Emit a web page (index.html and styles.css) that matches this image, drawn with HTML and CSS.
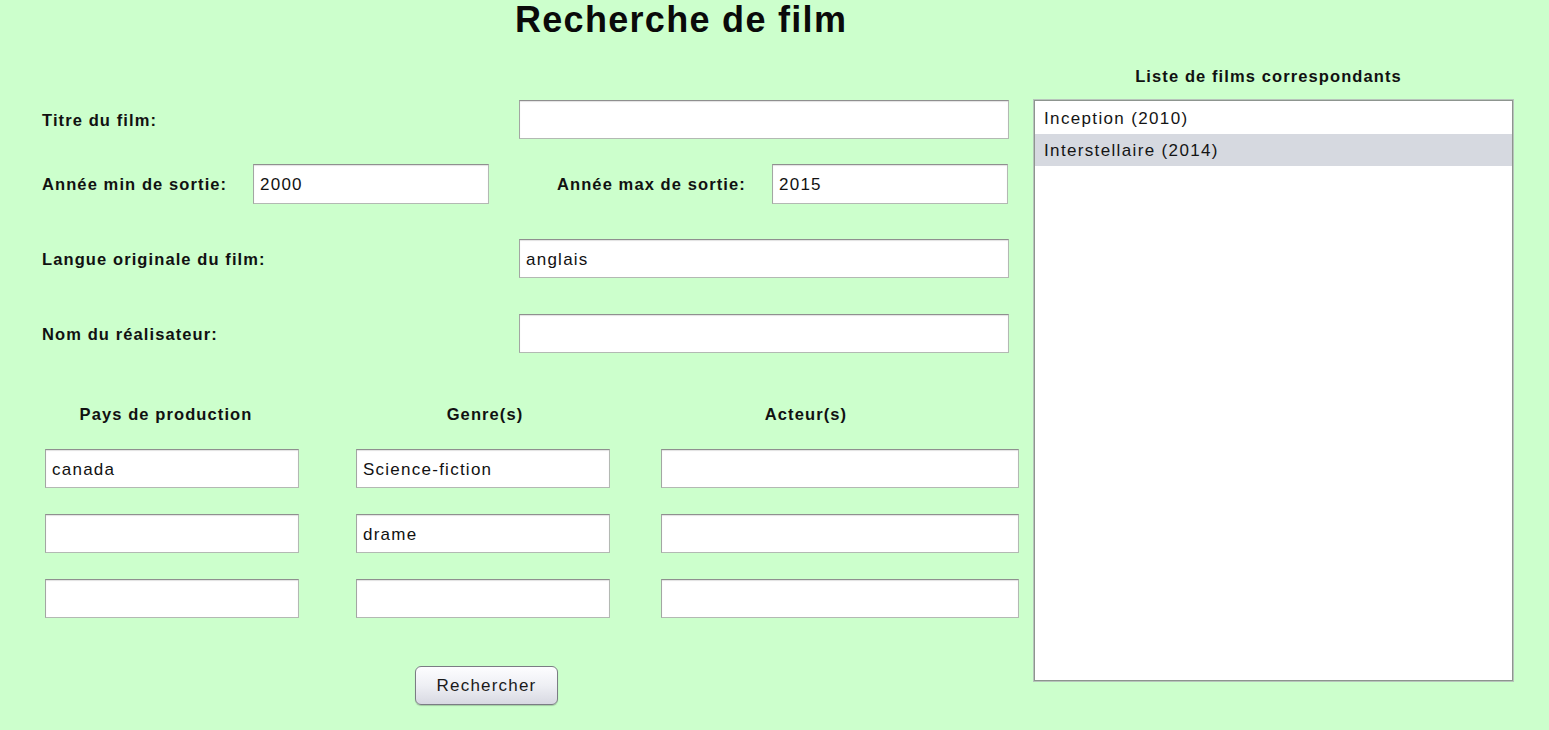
FILE: index.html
```html
<!DOCTYPE html>
<html lang="fr">
<head>
<meta charset="utf-8">
<title>Recherche de film</title>
<link rel="stylesheet" href="styles.css">
</head>
<body>
<div class="page">
  <div class="left">
    <h1 class="title">Recherche de film</h1>

    <div class="row row-titre">
      <label class="label">Titre du film:</label>
      <input class="field field-wide" type="text" value="">
    </div>

    <div class="row row-annee">
      <label class="label">Année min de sortie:</label>
      <input class="field field-year" type="text" value="2000">
      <label class="label label-max">Année max de sortie:</label>
      <input class="field field-year" type="text" value="2015">
    </div>

    <div class="row row-langue">
      <label class="label">Langue originale du film:</label>
      <input class="field field-wide" type="text" value="anglais">
    </div>

    <div class="row row-nom">
      <label class="label">Nom du réalisateur:</label>
      <input class="field field-wide" type="text" value="">
    </div>

    <div class="cols">
      <div class="col col-pays">
        <div class="col-head">Pays de production</div>
        <input class="field" type="text" value="canada">
        <input class="field" type="text" value="">
        <input class="field" type="text" value="">
      </div>
      <div class="col col-genre">
        <div class="col-head">Genre(s)</div>
        <input class="field" type="text" value="Science-fiction">
        <input class="field" type="text" value="drame">
        <input class="field" type="text" value="">
      </div>
      <div class="col col-acteur">
        <div class="col-head">Acteur(s)</div>
        <input class="field" type="text" value="">
        <input class="field" type="text" value="">
        <input class="field" type="text" value="">
      </div>
    </div>

    <div class="actions">
      <button class="btn" type="button">Rechercher</button>
    </div>
  </div>

  <div class="right">
    <div class="list-head">Liste de films correspondants</div>
    <ul class="list">
      <li class="item">Inception (2010)</li>
      <li class="item item-selected">Interstellaire (2014)</li>
    </ul>
  </div>
</div>
</body>
</html>
```

FILE: styles.css
```css
* {
  box-sizing: border-box;
}

html, body {
  margin: 0;
  padding: 0;
  background: #ccffcc;
}

body {
  font-family: "Liberation Sans", Arial, sans-serif;
  color: #111;
  width: 1549px;
  height: 730px;
  overflow: hidden;
}

.page {
  display: flex;
  align-items: flex-start;
}

.left {
  width: 1034px;
  flex: none;
}

.title {
  margin: 0 0 0 515px;
  font-size: 36px;
  line-height: 40px;
  height: 40px;
  font-weight: bold;
  letter-spacing: 1.3px;
  color: #0a0a0a;
  white-space: nowrap;
}

.row {
  display: flex;
  align-items: center;
  height: 39px;
  padding-left: 42px;
}

.row-titre { margin-top: 60px; }
.row-annee { margin-top: 25px; }
.row-langue { margin-top: 36px; }
.row-nom { margin-top: 36px; }

.label {
  font-size: 16.5px;
  font-weight: bold;
  letter-spacing: 1.1px;
  line-height: 20px;
  white-space: nowrap;
  padding-top: 1px;
}

.row .label:first-child {
  width: 477px;
  flex: none;
}

.row-annee .label:first-child {
  width: 211px;
}

.label-max {
  width: 283px;
  flex: none;
  padding-left: 68px;
}

.field {
  display: block;
  height: 39px;
  margin: 0;
  padding: 3px 0 0 6px;
  background: #fff;
  border: 1px solid #b3b9b3;
  border-top-color: #8f8f8f;
  border-left-color: #a3a6a3;
  box-shadow: inset 0 1px 1px rgba(0, 0, 0, 0.12);
  font-family: "Liberation Sans", Arial, sans-serif;
  font-size: 17px;
  letter-spacing: 1.25px;
  color: #111;
  outline: none;
}

.field-wide {
  width: 490px;
}

.field-year {
  width: 236px;
  height: 40px;
}

.cols {
  display: flex;
  align-items: flex-start;
  margin-top: 51px;
}

.col {
  display: flex;
  flex-direction: column;
  gap: 26px;
  flex: none;
}

.col-pays {
  width: 254px;
  margin-left: 45px;
}

.col-genre {
  width: 254px;
  margin-left: 57px;
}

.col-acteur {
  width: 358px;
  margin-left: 51px;
}

.col .field {
  width: 100%;
}

.col-head {
  font-size: 16.5px;
  font-weight: bold;
  letter-spacing: 1.1px;
  line-height: 20px;
  text-align: center;
  white-space: nowrap;
  margin-bottom: -1px;
}

.col-pays .col-head { padding-right: 12px; }
.col-genre .col-head { padding-left: 4px; }
.col-acteur .col-head { padding-right: 68px; }

.actions {
  margin-top: 48px;
  padding-left: 415px;
}

.btn {
  width: 143px;
  height: 39px;
  border: 1px solid #7b7c84;
  border-radius: 6px;
  background: linear-gradient(to bottom, #fdfdff 0%, #eeeff4 50%, #d8d9e2 100%);
  box-shadow: 0 1px 1px rgba(0, 0, 0, 0.2);
  font-family: "Liberation Sans", Arial, sans-serif;
  font-size: 17px;
  letter-spacing: 1.2px;
  color: #1a1a1a;
  padding: 1px 0 0 0;
}

.right {
  width: 479px;
  flex: none;
  padding-top: 66px;
}

.list-head {
  font-size: 16.5px;
  font-weight: bold;
  letter-spacing: 1.1px;
  line-height: 20px;
  text-align: center;
  padding-right: 10px;
  white-space: nowrap;
}

.list {
  list-style: none;
  margin: 14px 0 0 0;
  padding: 1px 0 0 0;
  height: 581px;
  background: #fff;
  border: 1px solid #8d958f;
  box-shadow: 0 0 0 1px #b7c4bb;
}

.item {
  height: 32px;
  line-height: 30px;
  padding: 2px 0 0 9px;
  font-size: 17px;
  letter-spacing: 1.35px;
  color: #141414;
}

.item-selected {
  background: #d6d9e0;
}
```
